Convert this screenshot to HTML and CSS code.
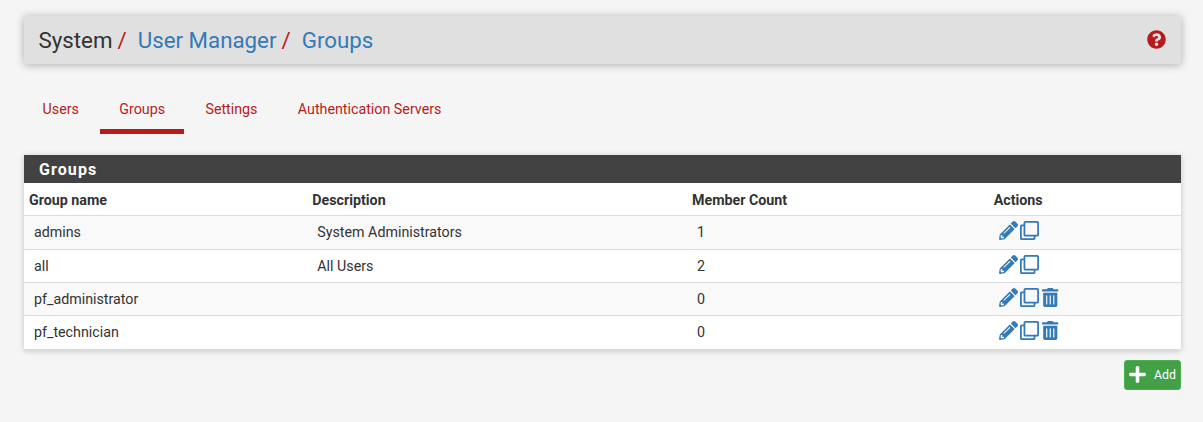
FILE: index.html
```html
<!DOCTYPE html>
<html lang="en">
<head>
<meta charset="utf-8">
<title>System: User Manager: Groups</title>
<link rel="stylesheet" href="styles.css">
</head>
<body>
<svg class="sprite" aria-hidden="true">
  <symbol id="pencil" viewBox="0 0 512 512"><path d="M497.9 142.1l-46.1 46.1c-4.7 4.7-12.3 4.7-17 0l-111-111c-4.7-4.7-4.7-12.3 0-17l46.1-46.1c18.7-18.7 49.1-18.7 67.9 0l60.1 60.1c18.8 18.7 18.8 49.1 0 67.9zM284.2 99.8L21.6 362.4.4 483.9c-2.9 16.4 11.4 30.6 27.8 27.8l121.5-21.3 262.6-262.6c4.7-4.7 4.7-12.3 0-17l-111-111c-4.8-4.7-12.4-4.7-17.1 0zM124.1 339.9c-5.5-5.5-5.5-14.3 0-19.8l154-154c5.5-5.5 14.3-5.5 19.8 0s5.5 14.3 0 19.8l-154 154c-5.5 5.5-14.3 5.5-19.8 0zM88 424h48v36.3l-64.5 11.3-31.1-31.1L51.7 376H88v48z"/></symbol>
  <symbol id="clone" viewBox="0 0 512 512"><path d="M464 0H144c-26.51 0-48 21.49-48 48v48H48c-26.51 0-48 21.49-48 48v320c0 26.51 21.49 48 48 48h320c26.51 0 48-21.49 48-48v-48h48c26.51 0 48-21.49 48-48V48c0-26.51-21.49-48-48-48zM362 464H54a6 6 0 0 1-6-6V150a6 6 0 0 1 6-6h42v224c0 26.51 21.49 48 48 48h224v42a6 6 0 0 1-6 6zm96-96H150a6 6 0 0 1-6-6V54a6 6 0 0 1 6-6h308a6 6 0 0 1 6 6v308a6 6 0 0 1-6 6z"/></symbol>
  <symbol id="trash" viewBox="0 0 448 512"><path d="M32 464a48 48 0 0 0 48 48h288a48 48 0 0 0 48-48V128H32zm272-256a16 16 0 0 1 32 0v224a16 16 0 0 1-32 0zm-96 0a16 16 0 0 1 32 0v224a16 16 0 0 1-32 0zm-96 0a16 16 0 0 1 32 0v224a16 16 0 0 1-32 0zM432 32H312l-9.4-18.7A24 24 0 0 0 281.1 0H166.8a23.72 23.72 0 0 0-21.4 13.3L136 32H16A16 16 0 0 0 0 48v32a16 16 0 0 0 16 16h416a16 16 0 0 0 16-16V48a16 16 0 0 0-16-16z"/></symbol>
</svg>
<header class="header">
  <ol class="breadcrumb">
    <li>System</li>
    <li><a href="#">User Manager</a></li>
    <li><a href="#">Groups</a></li>
  </ol>
  <svg class="help" viewBox="0 0 512 512"><path d="M504 256c0 136.997-111.043 248-248 248S8 392.997 8 256C8 119.083 119.043 8 256 8s248 111.083 248 248zM262.655 90c-54.497 0-89.255 22.957-116.549 63.758-3.536 5.286-2.353 12.415 2.715 16.258l34.699 26.31c5.205 3.947 12.621 3.008 16.665-2.122 17.864-22.658 30.113-35.797 57.303-35.797 20.429 0 45.698 13.148 45.698 32.958 0 14.976-12.363 22.667-32.534 33.976C247.128 238.528 216 254.941 216 296v4c0 6.627 5.373 12 12 12h56c6.627 0 12-5.373 12-12v-1.333c0-28.462 83.186-29.647 83.186-106.667 0-58.002-60.165-102-116.531-102zM256 338c-25.365 0-46 20.635-46 46 0 25.364 20.635 46 46 46s46-20.636 46-46c0-25.365-20.635-46-46-46z"/></svg>
</header>
<nav class="tabs">
  <a href="#">Users</a>
  <a href="#" class="active">Groups</a>
  <a href="#">Settings</a>
  <a href="#">Authentication Servers</a>
</nav>
<section class="panel">
  <h2>Groups</h2>
  <div class="row head"><span>Group name</span><span>Description</span><span>Member Count</span><span>Actions</span></div>
  <div class="row odd"><span>admins</span><span>System Administrators</span><span>1</span><span class="actions"><svg><use href="#pencil"/></svg><svg><use href="#clone"/></svg></span></div>
  <div class="row"><span>all</span><span>All Users</span><span>2</span><span class="actions"><svg><use href="#pencil"/></svg><svg><use href="#clone"/></svg></span></div>
  <div class="row odd"><span>pf_administrator</span><span></span><span>0</span><span class="actions"><svg><use href="#pencil"/></svg><svg><use href="#clone"/></svg><svg class="bin"><use href="#trash"/></svg></span></div>
  <div class="row"><span>pf_technician</span><span></span><span>0</span><span class="actions"><svg><use href="#pencil"/></svg><svg><use href="#clone"/></svg><svg class="bin"><use href="#trash"/></svg></span></div>
</section>
<div class="buttons">
  <a class="add" href="#"><svg viewBox="0 0 448 512"><path d="M416 208H272V64c0-17.67-14.33-32-32-32h-32c-17.67 0-32 14.33-32 32v144H32c-17.67 0-32 14.33-32 32v32c0 17.67 14.33 32 32 32h144v144c0 17.67 14.33 32 32 32h32c17.67 0 32-14.33 32-32V304h144c17.67 0 32-14.33 32-32v-32c0-17.67-14.33-32-32-32z"/></svg><span>Add</span></a>
</div>
</body>
</html>
```

FILE: styles.css
```css
* { box-sizing: border-box; }
body {
  margin: 0;
  padding: 16px 22px 0 24px;
  background: #f5f5f5;
  color: #333;
  font: 14.25px/20px Roboto, sans-serif;
}
a { color: #337ab7; text-decoration: none; }
svg { fill: currentColor; }
.sprite { display: none; }
.header {
  display: flex;
  align-items: center;
  justify-content: space-between;
  height: 48px;
  padding: 0 15px 0 14.5px;
  border-radius: 2px;
  background: #e0e0e0;
  box-shadow: 0 1px 8px rgba(0, 0, 0, .3);
}
.breadcrumb {
  display: flex;
  margin: 0;
  padding: 0;
  list-style: none;
  font-size: 22.3px;
  line-height: 48px;
}
.breadcrumb li + li::before { content: "/"; margin: 0 11px 0 5px; color: #b71c1c; }
.help { width: 19px; height: 19px; margin-bottom: 1px; color: #b71c1c; }
.tabs { display: flex; gap: 2px; height: 44px; margin-top: 26px; }
.tabs a {
  padding: 9px 19.2px 0;
  color: #b71c1c;
  border-bottom: 5px solid transparent;
}
.tabs a:first-child { padding-left: 18.6px; }
.tabs .active { border-color: #b71c1c; }
.panel { margin-top: 21px; background: #fff; box-shadow: 0 1px 6px rgba(0, 0, 0, .2); }
.panel h2 {
  margin: 0;
  padding-left: 15px;
  height: 28px;
  background: #424242;
  color: #fff;
  font-size: 16px;
  line-height: 29px;
  letter-spacing: 1.1px;
}
.row {
  display: grid;
  grid-template-columns: 283.3px 379.7px 301.7px 1fr;
  height: 33.3px;
  border-bottom: 1px solid #ddd;
  line-height: 33.4px;
}
.row span { padding-left: 10px; }
.row.head { height: 33.4px; font-weight: 700; line-height: 34px; }
.head span { padding-left: 5px; }
.odd { background: #f9f9f9; }
.row .actions { display: flex; gap: 2.5px; padding: 5px 0 0 10px; color: #337ab7; }
.actions svg { width: 19px; height: 19px; }
.actions .bin { width: 16.5px; margin-left: .5px; }
.buttons { display: flex; justify-content: flex-end; margin-top: 10px; }
.add {
  display: flex;
  align-items: center;
  gap: 8px;
  width: 57px;
  height: 30px;
  padding-left: 4px;
  border: 1px solid #4caf50;
  border-radius: 3px;
  background: #43a047;
  color: #fff;
  font-size: 12.3px;
}
.add svg { width: 17px; height: 19px; }
```
